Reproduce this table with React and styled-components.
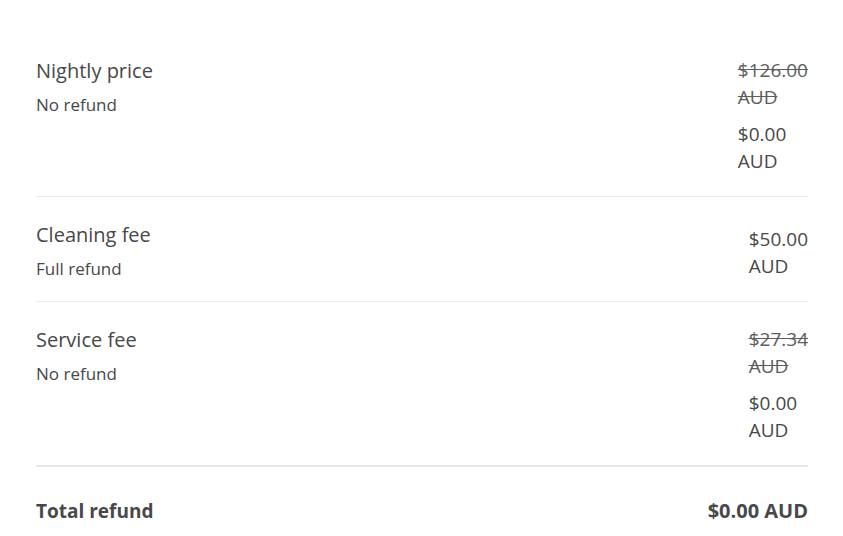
import React from 'react';
import styled, { createGlobalStyle } from 'styled-components';

const GlobalStyle = createGlobalStyle`
  body {
    margin: 0;
    background: #ffffff;
    font-family: "Open Sans", "Liberation Sans", sans-serif;
    color: #484848;
  }
`;

const Breakdown = styled.div`
  padding: 33px 35px 0 36px;
`;

const Row = styled.div`
  display: flex;
  justify-content: space-between;
  align-items: flex-start;
  padding: 24px 0 21px;
  border-bottom: ${props => (props.$thick ? '2px solid #e8e8e8' : '1px solid #ebebeb')};
`;

const Label = styled.div`
  display: flex;
  flex-direction: column;
  gap: 9px;
`;

const Title = styled.span`
  font-size: 20px;
  line-height: 28px;
`;

const Note = styled.span`
  font-size: 17px;
  line-height: 22px;
`;

const Amounts = styled.div`
  display: flex;
  flex-direction: column;
  gap: 10px;
  width: min-content;
  padding-top: ${props => (props.$single ? '5px' : '0')};
`;

const Price = styled.span`
  font-size: 19px;
  line-height: 27px;
  color: ${props => (props.$old ? '#5e5e5e' : '#484848')};
  text-decoration: ${props => (props.$old ? 'line-through' : 'none')};
`;

const Total = styled.div`
  display: flex;
  justify-content: space-between;
  padding-top: 30px;
  font-size: 19px;
  line-height: 28px;
  font-weight: 700;
`;

const Amount = styled.span`
  font-size: 20px;
`;

const items = [
  { title: 'Nightly price', note: 'No refund', old: '$126.00 AUD', price: '$0.00 AUD' },
  { title: 'Cleaning fee', note: 'Full refund', price: '$50.00 AUD' },
  { title: 'Service fee', note: 'No refund', old: '$27.34 AUD', price: '$0.00 AUD' },
];

export default function App() {
  return (
    <>
      <GlobalStyle />
      <Breakdown>
        {items.map((item, i) => (
          <Row key={item.title} $thick={i === items.length - 1}>
            <Label>
              <Title>{item.title}</Title>
              <Note>{item.note}</Note>
            </Label>
            <Amounts $single={!item.old}>
              {item.old && <Price $old>{item.old}</Price>}
              <Price>{item.price}</Price>
            </Amounts>
          </Row>
        ))}
        <Total>
          <span>Total refund</span>
          <Amount>$0.00 AUD</Amount>
        </Total>
      </Breakdown>
    </>
  );
}
